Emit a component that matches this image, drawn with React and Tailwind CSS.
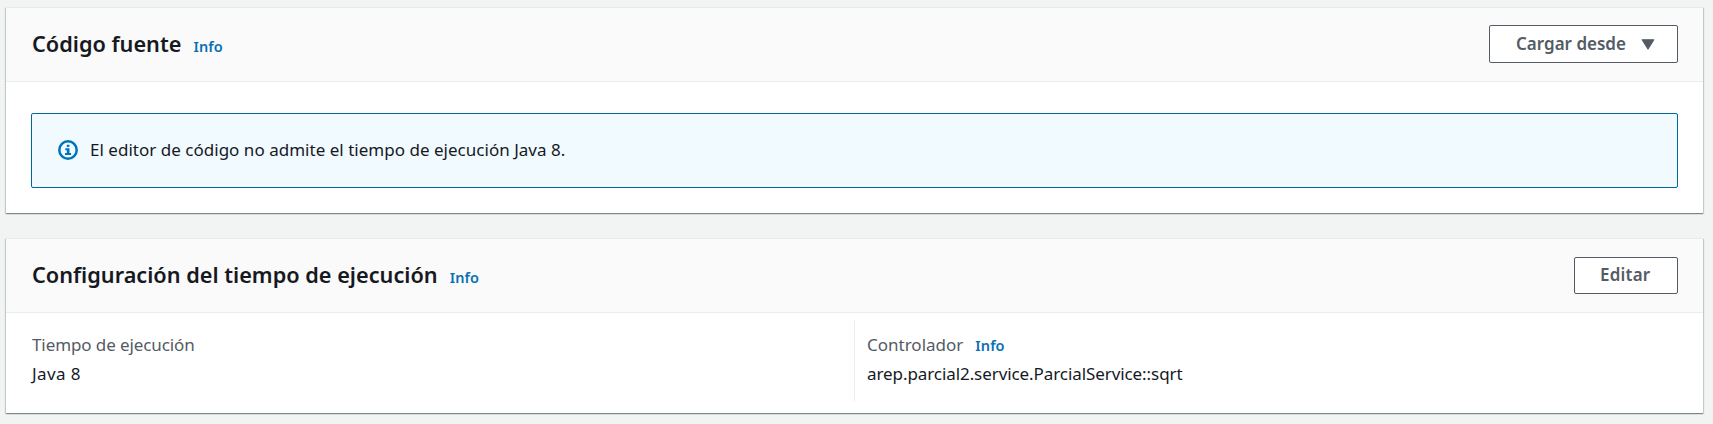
function InfoLink({ className = "" }) {
  return (
    <a href="#" className={`text-[14.5px] leading-5 font-semibold tracking-[0.1px] text-[#0a70b3] ${className}`}>
      Info
    </a>
  );
}

function Button({ children, className = "" }) {
  return (
    <button
      type="button"
      className={`flex items-center rounded-[2px] border border-[#545b64] bg-white pb-px text-[17px] font-semibold text-[#545b64] ${className}`}
    >
      {children}
    </button>
  );
}

function Panel({ title, action, children, className = "" }) {
  return (
    <section
      className={`flex flex-col border-t border-[#e8eaea] bg-white shadow-[0_1px_1px_0_rgba(0,28,36,0.3),1px_1px_1px_0_rgba(0,28,36,0.15),-1px_1px_1px_0_rgba(0,28,36,0.15)] ${className}`}
    >
      <header className="flex h-[74px] shrink-0 items-center justify-between border-b border-[#eaeded] bg-[#fafafa] pr-[25px] pl-[26px]">
        <div className="flex items-baseline gap-3 pb-[2px]">
          <h2 className="text-[21.7px] leading-7 font-semibold text-[#16191f]">{title}</h2>
          <InfoLink />
        </div>
        {action}
      </header>
      {children}
    </section>
  );
}

export default function App() {
  return (
    <main className="flex h-[424px] w-full flex-col gap-[25px] overflow-hidden bg-[#f2f3f3] pt-[7px] pr-[10px] pl-[6px] font-['Noto_Sans',sans-serif] text-[17px] text-[#16191f]">
      <Panel
        title="Código fuente"
        className="h-[206px]"
        action={
          <Button className="mb-px h-[38px] w-[189px] pl-[26px]">
            Cargar desde
            <svg className="mt-px ml-[15px] h-[11px] w-[14px]" viewBox="0 0 14 11" fill="#545b64">
              <path d="M1.2 0.8H12.8L7 10Z" stroke="#545b64" strokeWidth="1.2" strokeLinejoin="round" />
            </svg>
          </Button>
        }
      >
        <div className="mx-[25px] mt-[31px] flex h-[75px] items-center rounded-[2px] border border-[#00699a] bg-[#f1faff] pb-px pl-[26px]">
          <svg className="h-5 w-5" viewBox="0 0 20 20" fill="none">
            <circle cx="10" cy="10" r="8.7" stroke="#0073bb" strokeWidth="2.5" />
            <path d="M8.8 4.8H11.4V7H8.8ZM7.3 8.2H11.5V12.9H13.1V15H7V12.9H8.8V10.2H7.3Z" fill="#0073bb" />
          </svg>
          <p className="pb-px pl-[12px] tracking-[0.02px]">El editor de código no admite el tiempo de ejecución Java 8.</p>
        </div>
      </Panel>
      <Panel
        title="Configuración del tiempo de ejecución"
        className="h-[175px]"
        action={<Button className="h-[37px] w-[104px] pl-[25px] tracking-[0.2px]">Editar</Button>}
      >
        <dl className="mt-[7px] grid h-[81px] grid-cols-[848px_1fr] leading-[29px]">
          <div className="pt-[10px] pl-[26px]">
            <dt className="tracking-[-0.1px] text-[#545b64]">Tiempo de ejecución</dt>
            <dd className="tracking-[0.4px]">Java 8</dd>
          </div>
          <div className="border-l border-[#eaeded] pt-[10px] pl-[12px]">
            <dt className="flex items-baseline gap-3 text-[#545b64]">
              Controlador
              <InfoLink />
            </dt>
            <dd className="tracking-[-0.08px]">arep.parcial2.service.ParcialService::sqrt</dd>
          </div>
        </dl>
      </Panel>
    </main>
  );
}
